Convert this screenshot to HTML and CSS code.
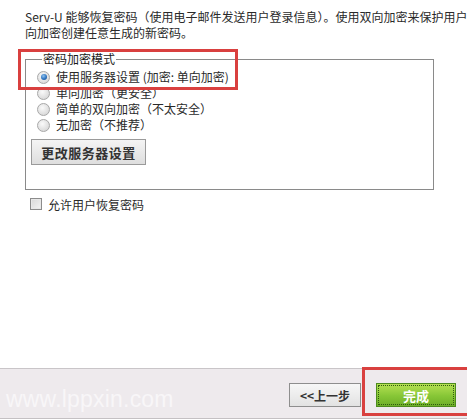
FILE: index.html
```html
<!DOCTYPE html>
<html lang="zh-CN">
<head>
<meta charset="utf-8">
<title>Serv-U 密码恢复</title>
<link rel="stylesheet" href="styles.css">
</head>
<body>
<div class="page">
  <div class="main">
    <p class="intro">
      <span class="line">Serv-U 能够恢复密码（使用电子邮件发送用户登录信息）。使用双向加密来保护用户</span>
      <span class="line">向加密创建任意生成的新密码。</span>
    </p>
    <fieldset class="group">
      <legend class="legend">密码加密模式</legend>
      <div class="opt"><span class="radio checked"></span><span>使用服务器设置 (加密: 单向加密)</span></div>
      <div class="opt"><span class="radio"></span><span>单向加密（更安全）</span></div>
      <div class="opt"><span class="radio"></span><span>简单的双向加密（不太安全）</span></div>
      <div class="opt"><span class="radio"></span><span>无加密（不推荐）</span></div>
      <button class="btn-server">更改服务器设置</button>
    </fieldset>
    <div class="check-row"><span class="check"></span><span>允许用户恢复密码</span></div>
  </div>
  <div class="footer">
    <button class="btn-prev">&lt;&lt;上一步</button>
    <button class="btn-done"><span class="done-inner">完成</span></button>
    <span class="watermark">www.lppxin.com</span>
  </div>
  <div class="mark mark-legend"></div>
  <div class="mark mark-done"></div>
</div>
</body>
</html>
```
FILE: styles.css
```css
html, body {
  margin: 0;
  padding: 0;
  background: #fff;
}
.page {
  position: relative;
  width: 467px;
  height: 420px;
  overflow: hidden;
  display: flex;
  flex-direction: column;
  font-family: "Noto Sans CJK SC", "DejaVu Sans", sans-serif;
  font-size: 12px;
  color: #2a2a2a;
}
.main {
  flex: 1;
  padding-left: 25px;
}
.intro {
  margin: 0;
  padding-top: 9px;
  line-height: 16px;
  white-space: nowrap;
}
.line {
  display: block;
}
.group {
  margin: 10px 0 0 0;
  box-sizing: border-box;
  width: 409px;
  border: 1px solid #8a8a8a;
  padding: 2px 0 24px 11px;
}
.legend {
  padding: 0 1px;
  margin-left: 5px;
  line-height: 16px;
  color: #1a1a1a;
}
.opt {
  display: flex;
  align-items: center;
  height: 16px;
  line-height: 16px;
  gap: 6px;
}
.radio {
  width: 11px;
  height: 11px;
  border-radius: 50%;
  border: 1px solid #a8a8a8;
  background: radial-gradient(circle at 40% 35%, #fafafa 0%, #dcdcdc 70%, #c8c8c8 100%);
  box-sizing: content-box;
  flex: none;
  position: relative;
}
.radio.checked::after {
  content: "";
  position: absolute;
  left: 2.5px;
  top: 2.5px;
  width: 6px;
  height: 6px;
  border-radius: 50%;
  background: radial-gradient(circle at 40% 35%, #8fc2ee 0%, #2f74c0 55%, #16477f 100%);
}
.btn-server {
  display: block;
  margin: 6px 0 0 -6px;
  width: 115px;
  height: 26px;
  border: 1px solid #9a9a9a;
  background: linear-gradient(#f4f4f4, #dedede);
  font-family: "Noto Sans CJK SC", sans-serif;
  font-size: 13px;
  font-weight: bold;
  color: #333;
  padding: 0;
  letter-spacing: 0.5px;
}
.check-row {
  display: flex;
  align-items: center;
  gap: 6px;
  margin: 6px 0 0 5px;
  height: 16px;
}
.check {
  width: 10px;
  height: 10px;
  border: 1px solid #8c8c8c;
  background: linear-gradient(135deg, #d8d8d8, #f4f4f4);
  box-shadow: inset 0 0 0 1px #e8e8e8;
  flex: none;
}
.footer {
  position: relative;
  background: #eeeaed;
  border-top: 1px solid #c9c5c8;
  border-bottom: 1px solid #c4c0c3;
  margin-bottom: 1px;
  display: flex;
  justify-content: flex-end;
  align-items: flex-start;
  padding: 14px 11px 0 0;
  gap: 15px;
  box-sizing: border-box;
  height: 51px;
}
.btn-prev {
  width: 72px;
  height: 24px;
  border: 1px solid #8e8e8e;
  background: linear-gradient(#f7f7f7, #e2e2e2);
  font-family: "Noto Sans CJK SC", sans-serif;
  font-size: 12px;
  font-weight: bold;
  color: #333;
  padding: 0;
}
.btn-done {
  width: 80px;
  height: 24px;
  border: 1px solid #4d8a1e;
  background: linear-gradient(#b5e052, #86c636 55%, #6eae28);
  padding: 1px;
  box-sizing: border-box;
}
.done-inner {
  display: flex;
  align-items: center;
  justify-content: center;
  height: 100%;
  border: 1px dotted #2e5a10;
  box-sizing: border-box;
  font-family: "Noto Sans CJK SC", sans-serif;
  font-size: 13px;
  font-weight: bold;
  color: #fff;
}
.watermark {
  position: absolute;
  left: 6px;
  top: 17px;
  font-family: "Liberation Sans", sans-serif;
  font-size: 23px;
  color: #f8f6f8;
  letter-spacing: 0.2px;
}
.mark {
  position: absolute;
  border: 3px solid #d9403f;
  box-sizing: border-box;
}
.mark-legend {
  left: 18px;
  top: 49px;
  width: 220px;
  height: 41px;
}
.mark-done {
  left: 362px;
  top: 367px;
  width: 110px;
  height: 49px;
}
```
